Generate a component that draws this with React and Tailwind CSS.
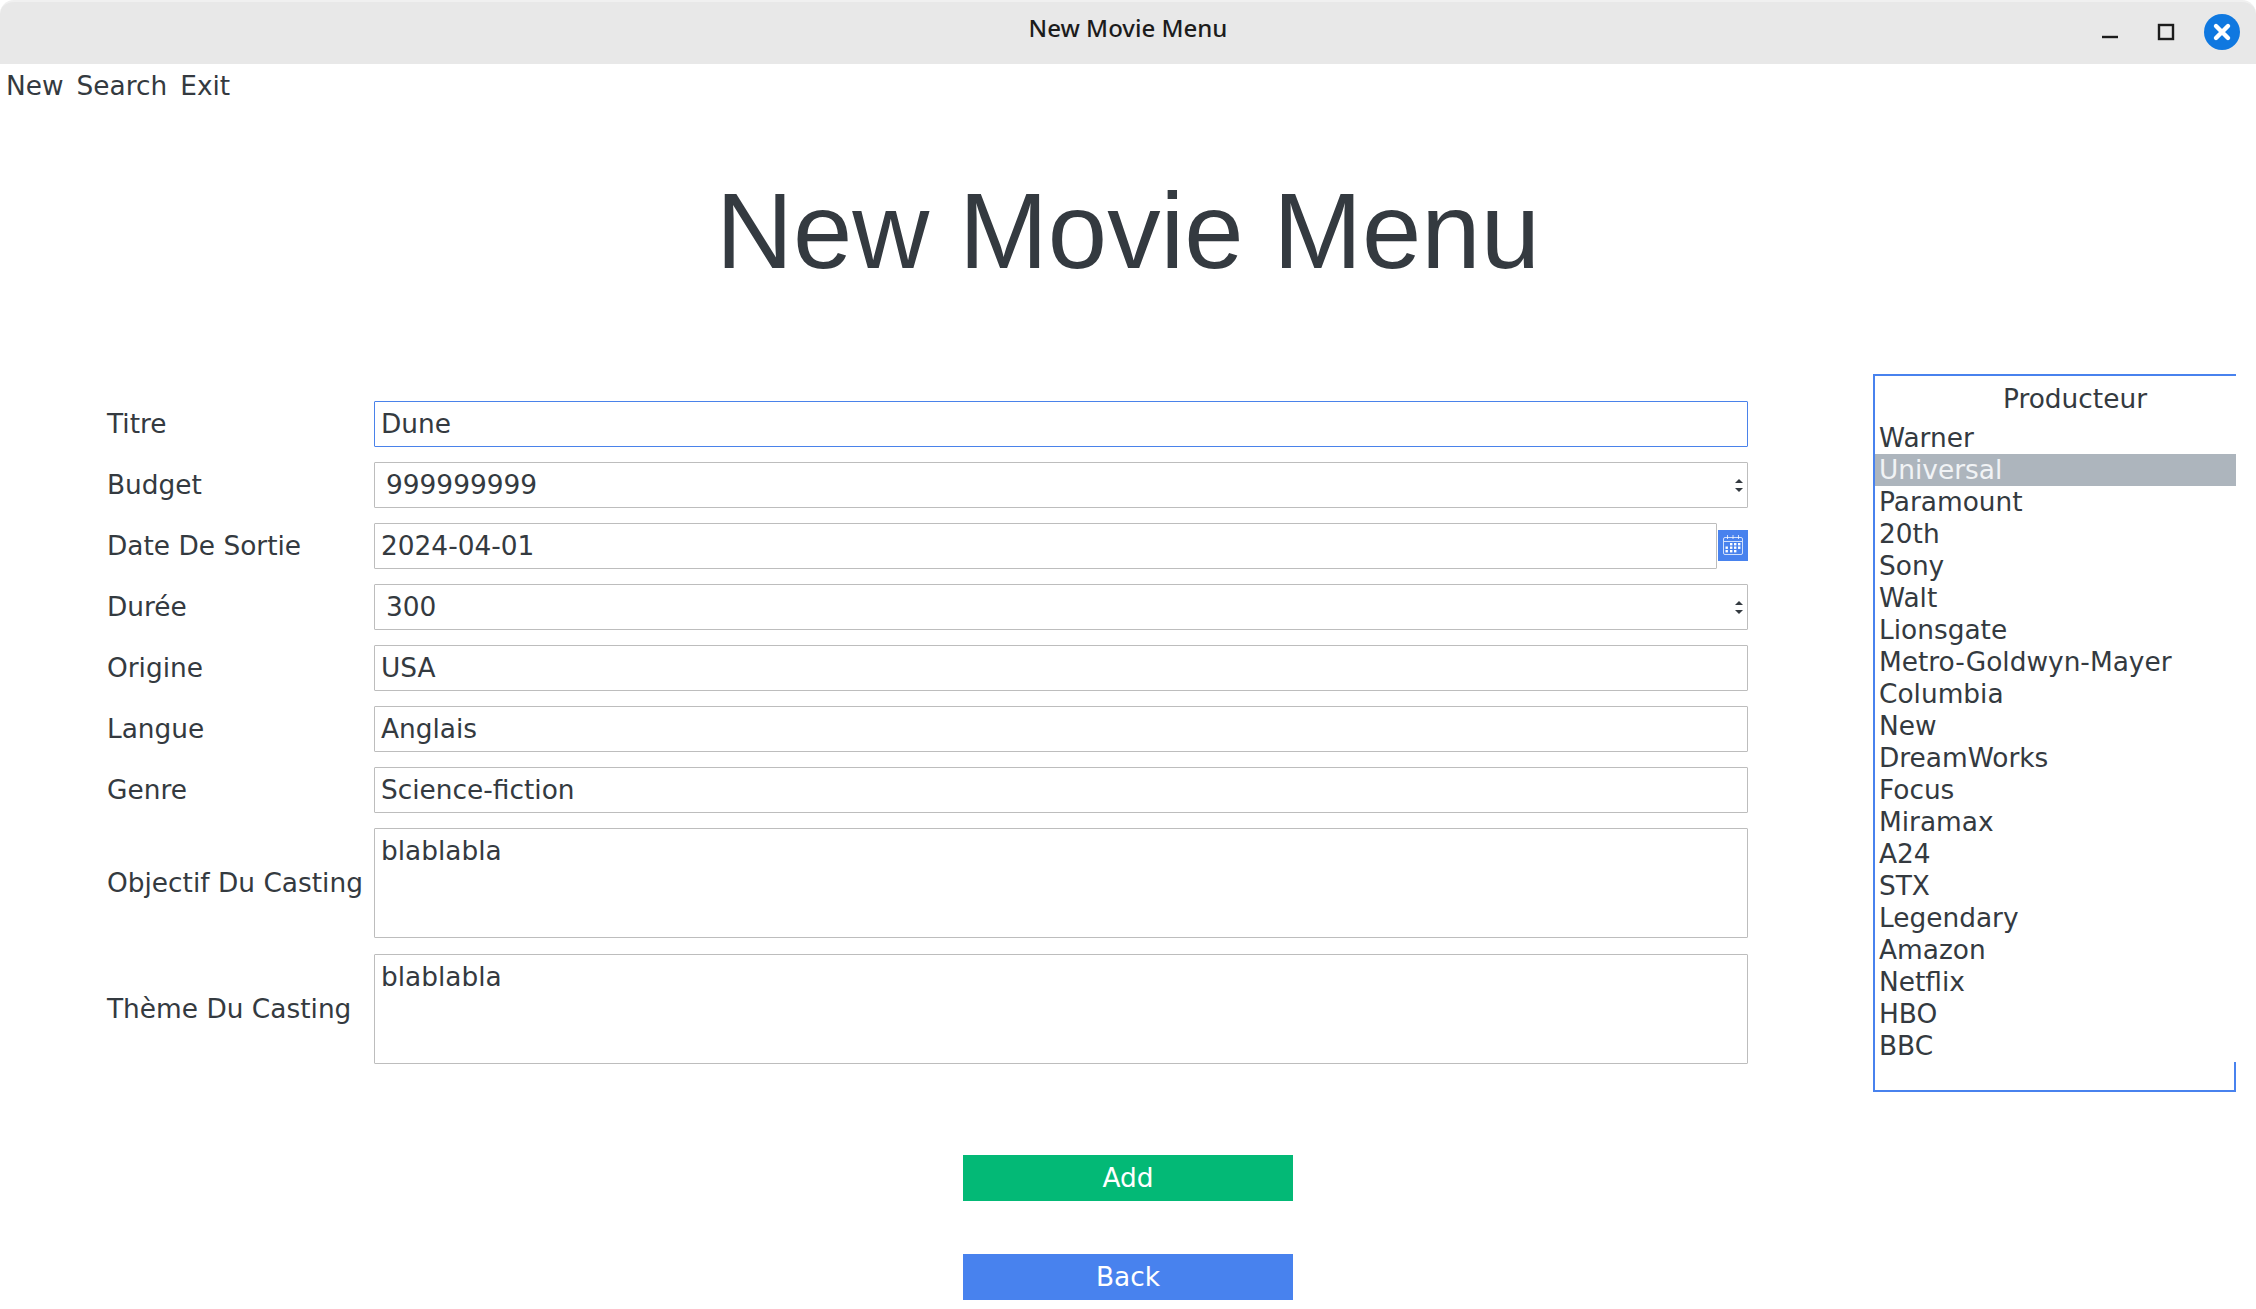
const producers = ['Warner', 'Universal', 'Paramount', '20th', 'Sony', 'Walt', 'Lionsgate', 'Metro-Goldwyn-Mayer', 'Columbia', 'New', 'DreamWorks', 'Focus', 'Miramax', 'A24', 'STX', 'Legendary', 'Amazon', 'Netflix', 'HBO', 'BBC'];

function Row({ label, children }) {
  return (
    <div className="flex items-center">
      <div className="w-[267px] shrink-0">{label}</div>
      <div className="flex-1 min-w-0">{children}</div>
    </div>
  );
}

function Field({ value, active }) {
  return (
    <div className={`h-[46px] border rounded-[1px] pl-[6px] flex items-center ${active ? 'border-[#4a82ea]' : 'border-[#bdbdbd]'}`}>
      {value}
    </div>
  );
}

function Spin({ value }) {
  return (
    <div className="h-[46px] border border-[#bdbdbd] rounded-[1px] pl-[11px] flex items-center justify-between">
      <span>{value}</span>
      <span className="flex flex-col gap-[3px] items-center w-[17px]">
        <svg width="8" height="6" viewBox="0 0 8 6"><path d="M4 1 8 5H0z" fill="#343a40" /></svg>
        <svg width="8" height="6" viewBox="0 0 8 6"><path d="M0 1h8L4 5z" fill="#343a40" /></svg>
      </span>
    </div>
  );
}

function Area({ value }) {
  return (
    <div className="h-[110px] border border-[#bdbdbd] rounded-[1px] pl-[6px] pt-[6px]">{value}</div>
  );
}

function CalendarIcon() {
  return (
    <svg width="22" height="22" viewBox="0 0 22 22" fill="none" stroke="#fff">
      <rect x="1.5" y="3.5" width="19" height="17" rx="1.5" strokeOpacity="0.75" />
      <path d="M5.5 1v4M11 1v4M16.5 1v4M2 7.5h18" strokeOpacity="0.75" />
      <g fill="#fff" stroke="none">
        <rect x="8" y="9" width="2.4" height="2.4" />
        <rect x="12" y="9" width="2.4" height="2.4" />
        <rect x="16" y="9" width="2.4" height="2.4" />
        <rect x="3.5" y="12.5" width="2.4" height="2.4" />
        <rect x="8" y="12.5" width="2.4" height="2.4" />
        <rect x="12" y="12.5" width="2.4" height="2.4" />
        <rect x="16" y="12.5" width="2.4" height="2.4" />
        <rect x="3.5" y="16" width="2.4" height="2.4" />
        <rect x="8" y="16" width="2.4" height="2.4" />
        <rect x="12" y="16" width="2.4" height="2.4" />
      </g>
    </svg>
  );
}

export default function App() {
  return (
    <div className="w-[2256px] h-[1309px] overflow-hidden bg-white text-[#343a40] text-[26.4px] leading-[32px] font-['DejaVu_Sans',sans-serif]">
      <div className="h-[64px] bg-[#e8e8e8] border-t-2 border-[#f0f0f0] rounded-t-[14px] flex items-center relative">
        <div className="flex-1 text-center text-[24px] text-[#1c1c1c] font-['Noto_Sans',sans-serif] -mt-[11px] font-medium">New Movie Menu</div>
        <div className="absolute right-[16px] top-[12px] flex items-center gap-[26px]">
          <svg width="30" height="30" viewBox="0 0 30 30" fill="none" stroke="#1c1c1c" strokeWidth="2.4"><path d="M7 20h16" /></svg>
          <svg className="-mr-[3px]" width="30" height="30" viewBox="0 0 30 30" fill="none" stroke="#1c1c1c" strokeWidth="2.4"><rect x="8" y="8" width="14" height="14" /></svg>
          <svg width="36" height="36" viewBox="0 0 36 36"><circle cx="18" cy="18" r="18" fill="#0f78e0" /><path d="M12 12l12 12M24 12 12 24" stroke="#fff" strokeWidth="4.4" strokeLinecap="round" /></svg>
        </div>
      </div>

      <div className="flex gap-[13px] h-[32px] mt-[6px] pl-[6px]">
        <span>New</span>
        <span>Search</span>
        <span>Exit</span>
      </div>

      <h1 className="text-center text-[106.67px] leading-[122px] font-['Liberation_Sans',sans-serif] mt-[68px] text-[#343a40]">New Movie Menu</h1>

      <div className="flex mt-[82px] pl-[107px] items-start">
        <div className="w-[1641px] shrink-0 pt-[27px] flex flex-col gap-[15px]">
          <Row label="Titre"><Field value="Dune" active /></Row>
          <Row label="Budget"><Spin value="999999999" /></Row>
          <Row label="Date De Sortie">
            <div className="flex items-center">
              <div className="flex-1 min-w-0"><Field value="2024-04-01" /></div>
              <div className="w-[30px] h-[31px] ml-[1px] -mt-[2px] bg-[#4882ee] flex items-center justify-center"><CalendarIcon /></div>
            </div>
          </Row>
          <Row label="Durée"><Spin value="300" /></Row>
          <Row label="Origine"><Field value="USA" /></Row>
          <Row label="Langue"><Field value="Anglais" /></Row>
          <Row label="Genre"><Field value="Science-fiction" /></Row>
          <Row label="Objectif Du Casting"><Area value="blablabla" /></Row>
          <div className="mt-[1px]">
            <Row label="Thème Du Casting"><Area value="blablabla" /></Row>
          </div>
        </div>

        <div className="ml-[125px] w-[363px] h-[718px] border-l-2 border-t-2 border-b-2 border-[#4882ee] overflow-hidden relative">
          <div className="w-[400px] text-center pt-[7px] pb-[7px]">Producteur</div>
          <ul>
            {producers.map((name, i) => (
              <li key={name} className={`h-[32px] pl-[4px] ${i === 1 ? 'bg-[#adb5bd] text-[#f1f3f5]' : ''}`}>{name}</li>
            ))}
          </ul>
          <div className="absolute right-0 bottom-0 w-[2px] h-[28px] bg-[#4882ee]" />
        </div>
      </div>

      <div className="flex flex-col items-center gap-[53px] mt-[63px] text-white">
        <div className="w-[330px] h-[46px] bg-[#03b976] flex items-center justify-center">Add</div>
        <div className="w-[330px] h-[46px] bg-[#4882ee] flex items-center justify-center">Back</div>
      </div>
    </div>
  );
}
